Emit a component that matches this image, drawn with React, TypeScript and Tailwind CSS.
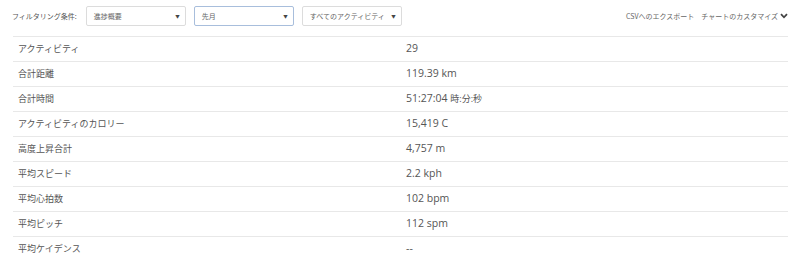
import React from "react";

const rows: [string, React.ReactNode][] = [
  ["アクティビティ", "29"],
  ["合計距離", "119.39 km"],
  [
    "合計時間",
    <>
      51:27:04 <span className="text-[9px]">時:分:秒</span>
    </>,
  ],
  ["アクティビティのカロリー", "15,419 C"],
  ["高度上昇合計", "4,757 m"],
  ["平均スピード", "2.2 kph"],
  ["平均心拍数", "102 bpm"],
  ["平均ピッチ", "112 spm"],
  ["平均ケイデンス", "--"],
];

function Select({ label, active }: { label: string; active?: boolean }) {
  return (
    <div
      className={`flex h-[20px] w-[100px] items-center justify-between overflow-hidden whitespace-nowrap rounded-[2px] border bg-white pl-[7px] pr-[5px] text-[7px] text-[#666] ${
        active ? "border-[#a8bedc]" : "border-[#dcdcdc]"
      }`}
    >
      <span>{label}</span>
      <span className="text-[4.5px] text-[#444]">▼</span>
    </div>
  );
}

export default function App() {
  return (
    <div
      className="h-[277px] w-[800px] bg-white pl-[13px] pr-[12px] text-[#555]"
      style={{ fontFamily: '"Open Sans", "Noto Sans CJK JP", sans-serif' }}
    >
      <div
        className="flex h-[36px] items-start pt-[6px]"
        style={{ fontFamily: '"Noto Sans CJK JP", sans-serif' }}
      >
        <div className="-ml-px flex items-center">
          <span className="mr-[9px] whitespace-nowrap text-[7px] text-[#555]">フィルタリング条件:</span>
          <div className="flex items-center gap-[8px]">
            <Select label="進捗概要" />
            <Select label="先月" active />
            <Select label="すべてのアクティビティ" />
          </div>
        </div>
        <div className="ml-auto flex h-[20px] items-center gap-[7px] whitespace-nowrap text-[7px] text-[#666]">
          <span>CSVへのエクスポート</span>
          <span className="flex items-center gap-[2px]">
            チャートのカスタマイズ
            <svg width="8" height="6" viewBox="0 0 8 6">
              <path d="M1 1.2 L4 4.3 L7 1.2" fill="none" stroke="#444" strokeWidth="1.8" />
            </svg>
          </span>
        </div>
      </div>
      <div>
        {rows.map(([label, value]) => (
          <div
            key={label}
            className="grid h-[25px] grid-cols-[388px_1fr] items-center border-t border-[#e8e8e8]"
          >
            <div className="pl-[5px] text-[9px] text-[#555]">{label}</div>
            <div className="pl-[5px] text-[10.5px] text-[#555]">{value}</div>
          </div>
        ))}
      </div>
    </div>
  );
}
